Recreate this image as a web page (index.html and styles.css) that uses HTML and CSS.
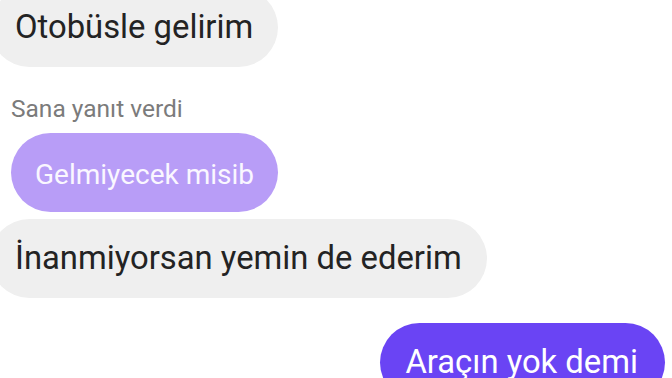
FILE: index.html
```html
<!DOCTYPE html>
<html lang="tr">
<head>
    <meta charset="UTF-8">
    <meta name="viewport" content="width=device-width, initial-scale=1.0">
    <title>Sohbet</title>
    <link rel="stylesheet" href="styles.css">
</head>
<body>
    <div class="chat">
        <div class="bubble bubble-in first">Otobüsle gelirim</div>

        <div class="reply-label">Sana yanıt verdi</div>
        <div class="bubble bubble-quote">Gelmiyecek misib</div>
        <div class="bubble bubble-in">İnanmiyorsan yemin de ederim</div>

        <div class="bubble bubble-out">Araçın yok demi</div>
    </div>
</body>
</html>
```

FILE: styles.css
```css
body {
    margin: 0;
    padding: 0;
    background-color: #ffffff;
    font-family: 'Roboto', 'Noto Sans', sans-serif;
    overflow: hidden;
    height: 100vh;
}

.chat {
    display: flex;
    flex-direction: column;
    align-items: flex-start;
    padding: 0 7px 0 0;
}

.bubble {
    height: 79px;
    line-height: 79px;
    padding: 0 25px;
    border-radius: 40px;
    font-size: 32.8px;
    white-space: nowrap;
}

.bubble-in {
    background-color: #efefef;
    color: #232323;
    margin-left: -10px;
}

.first {
    margin-top: -12px;
}

.reply-label {
    margin-top: 27px;
    margin-left: 11px;
    font-size: 24.5px;
    line-height: 30px;
    color: #7b7b7b;
}

.bubble-quote {
    margin-top: 9px;
    margin-left: 11px;
    margin-bottom: 7px;
    padding: 0 24px;
    font-size: 28px;
    line-height: 84px;
    background-color: #b89df7;
    color: #faf7ff;
}

.bubble-out {
    align-self: flex-end;
    margin-top: 25px;
    padding: 0 27px 0 25px;
    background-color: #6a44f4;
    color: #ffffff;
}
```
